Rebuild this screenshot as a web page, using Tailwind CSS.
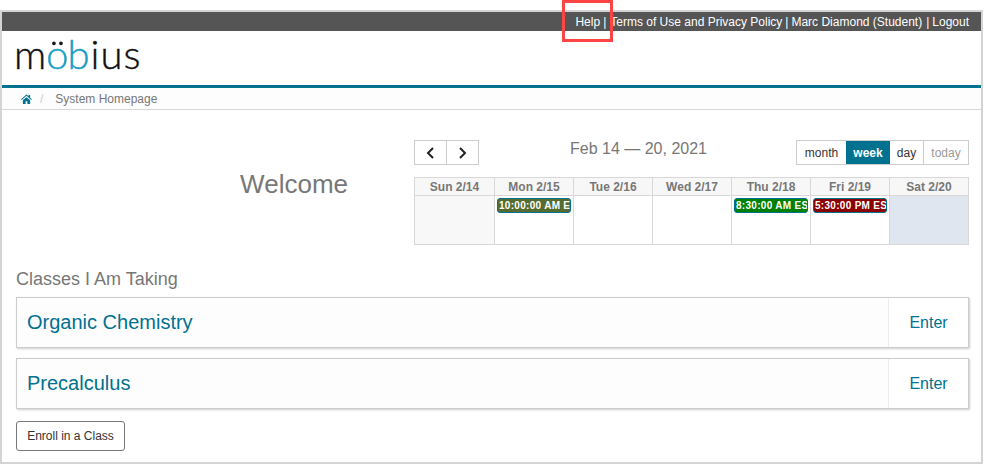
<!DOCTYPE html>
<html lang="en">
  <head>
    <meta charset="UTF-8" />
    <title>Mobius</title>
    <script src="https://cdn.jsdelivr.net/npm/@tailwindcss/browser@4"></script>
  </head>
  <body class="bg-white font-['Liberation_Sans',Arial,sans-serif] text-[12px] text-[#333]">
    <div class="relative w-[984px] h-[464px] overflow-hidden pt-[10px]">
      <div class="w-[983px] h-[454px] border-2 border-[#d4d4d4] flex flex-col">
        <!-- top bar -->
        <div class="h-[19px] bg-[#555555] text-white flex items-center justify-end pr-[12px] text-[12px] shrink-0">
          <a>Help</a><span class="ml-[3px] mr-[4px]">|</span><a>Terms of Use and Privacy Policy</a><span class="mx-[3px]">|</span><a>Marc Diamond (Student)</a><span class="ml-[4px] mr-[3px]">|</span><a>Logout</a>
        </div>

        <!-- logo -->
        <div class="h-[54px] shrink-0 pl-[12px] flex items-start">
          <div class="flex h-[46px] font-['Lato',sans-serif] font-light text-[40px] leading-[46px] tracking-[1px] [-webkit-text-stroke:0.4px_#111] text-[#111]">
            <span>m</span><span class="-ml-[1px] text-transparent bg-clip-text bg-[linear-gradient(#111_0_17px,#1a9cc4_17px)] [-webkit-text-stroke:0.4px_transparent]">ö</span><span class="-ml-[2px] text-[#1a9cc4] [-webkit-text-stroke:0.4px_#1a9cc4]">b</span><span>ius</span>
          </div>
        </div>
        <div class="h-[3px] bg-[#00718f] shrink-0"></div>

        <!-- breadcrumb -->
        <div class="h-[22px] bg-[#fdfdfd] border-b border-[#d8d8d8] flex items-center pl-[19px] shrink-0 text-[#777]">
          <svg class="w-[11px] h-[10px]" viewBox="0 0 24 22" fill="#00718f"><path d="M12 1 0 11.500l1.500 1.700L12 4l10.500 9.200L24 11.500l-4-3.500V2h-3.500v3L12 1zM4 14v8h6v-6h4v6h6v-8l-8-7-8 7z"/></svg>
          <span class="ml-[8px] text-[#ccc]">/</span>
          <span class="ml-[12px]">System Homepage</span>
        </div>

        <!-- main -->
        <div class="flex-1 pl-[14px] pr-[12px] relative">
          <div class="flex mt-[30px] h-[105px]">
            <div class="w-[398px] flex justify-end">
              <h1 class="text-[#777] text-[26px] leading-[30px] mt-[29px] pr-[66px]">Welcome</h1>
            </div>
            <div class="w-[555px]">
              <div class="flex justify-between items-start h-[37px]">
                <div class="flex border border-[#ccc] h-[25px] w-[65px] bg-white">
                  <button class="flex-1 flex items-center justify-center border-r border-[#ccc]">
                    <svg class="w-[9px] h-[12px]" viewBox="0 0 9 12" fill="none" stroke="#222" stroke-width="2"><path d="M7 1 2 6l5 5"/></svg>
                  </button>
                  <button class="flex-1 flex items-center justify-center">
                    <svg class="w-[9px] h-[12px]" viewBox="0 0 9 12" fill="none" stroke="#222" stroke-width="2"><path d="M2 1l5 5-5 5"/></svg>
                  </button>
                </div>
                <div class="text-[16px] leading-[20px] text-[#777] -mt-[1px] ml-[2px]">Feb 14 — 20, 2021</div>
                <div class="flex border border-[#ccc] h-[25px] w-[173px] items-stretch text-[12px] leading-[20px]">
                  <div class="w-[49px] flex items-center justify-center text-[#333]">month</div>
                  <div class="w-[44px] flex items-center justify-center bg-[#00718f] text-white font-bold">week</div>
                  <div class="w-[34px] flex items-center justify-center border-r border-[#ccc] text-[#333]">day</div>
                  <div class="flex-1 flex items-center justify-center text-[#999]">today</div>
                </div>
              </div>
              <div class="grid grid-cols-[80px_79px_79px_79px_79px_79px_1fr] w-[555px] border border-[#d8d8d8] h-[68px] grid-rows-[18px_1fr]">
                <div class="bg-[#f7f7f7] border-r border-b border-[#d8d8d8] flex items-center justify-center font-bold text-[#777]">Sun 2/14</div>
                <div class="bg-[#f7f7f7] border-r border-b border-[#d8d8d8] flex items-center justify-center font-bold text-[#777]">Mon 2/15</div>
                <div class="bg-[#f7f7f7] border-r border-b border-[#d8d8d8] flex items-center justify-center font-bold text-[#777]">Tue 2/16</div>
                <div class="bg-[#f7f7f7] border-r border-b border-[#d8d8d8] flex items-center justify-center font-bold text-[#777]">Wed 2/17</div>
                <div class="bg-[#f7f7f7] border-r border-b border-[#d8d8d8] flex items-center justify-center font-bold text-[#777]">Thu 2/18</div>
                <div class="bg-[#f7f7f7] border-r border-b border-[#d8d8d8] flex items-center justify-center font-bold text-[#777]">Fri 2/19</div>
                <div class="bg-[#f7f7f7] border-b border-[#d8d8d8] flex items-center justify-center font-bold text-[#777]">Sat 2/20</div>
                <div class="bg-[#f8f8f8] border-r border-[#d8d8d8]"></div>
                <div class="border-r border-[#d8d8d8] px-[2px] pt-[2px]">
                  <div class="h-[15px] bg-[#556b2f] border border-[#00718f] rounded-[3px] text-white font-bold text-[10px] leading-[13px] whitespace-nowrap overflow-hidden pl-[1px] tracking-[0.3px]">10:00:00 AM EST</div>
                </div>
                <div class="border-r border-[#d8d8d8]"></div>
                <div class="border-r border-[#d8d8d8]"></div>
                <div class="border-r border-[#d8d8d8] px-[2px] pt-[2px]">
                  <div class="h-[15px] bg-[#008000] border border-[#00718f] rounded-[3px] text-white font-bold text-[10px] leading-[13px] whitespace-nowrap overflow-hidden pl-[1px] tracking-[0.3px]">8:30:00 AM EST</div>
                </div>
                <div class="border-r border-[#d8d8d8] px-[2px] pt-[2px]">
                  <div class="h-[15px] bg-[#8b0000] border border-[#00718f] rounded-[3px] text-white font-bold text-[10px] leading-[13px] whitespace-nowrap overflow-hidden pl-[1px] tracking-[0.3px]">5:30:00 PM EST</div>
                </div>
                <div class="bg-[#dfe6ef]"></div>
              </div>
            </div>
          </div>

          <!-- classes -->
          <h2 class="text-[18px] leading-[22px] text-[#777] mt-[23px]">Classes I Am Taking</h2>
          <div class="mt-[7px] flex flex-col gap-[10px]">
            <div class="flex h-[51px] border border-[#ccc] bg-[#fdfdfd] shadow-[1px_1px_2px_rgba(0,0,0,0.2)]">
              <div class="flex-1 flex items-center pl-[10px] pb-[2px] text-[20px] text-[#00718f]">Organic Chemistry</div>
              <div class="w-[80px] border-l border-[#eee] bg-white flex items-center justify-center text-[16px] text-[#00718f]">Enter</div>
            </div>
            <div class="flex h-[51px] border border-[#ccc] bg-[#fdfdfd] shadow-[1px_1px_2px_rgba(0,0,0,0.2)]">
              <div class="flex-1 flex items-center pl-[10px] pb-[2px] text-[20px] text-[#00718f]">Precalculus</div>
              <div class="w-[80px] border-l border-[#eee] bg-white flex items-center justify-center text-[16px] text-[#00718f]">Enter</div>
            </div>
          </div>
          <button class="mt-[12px] w-[109px] h-[30px] border border-[#777] rounded-[3px] text-[12px] text-[#333] bg-white">Enroll in a Class</button>
        </div>
      </div>

      <!-- annotation box -->
      <div class="absolute left-[562px] top-0 w-[51px] h-[42px] border-[3px] border-[#f44]"></div>
    </div>
  </body>
</html>
